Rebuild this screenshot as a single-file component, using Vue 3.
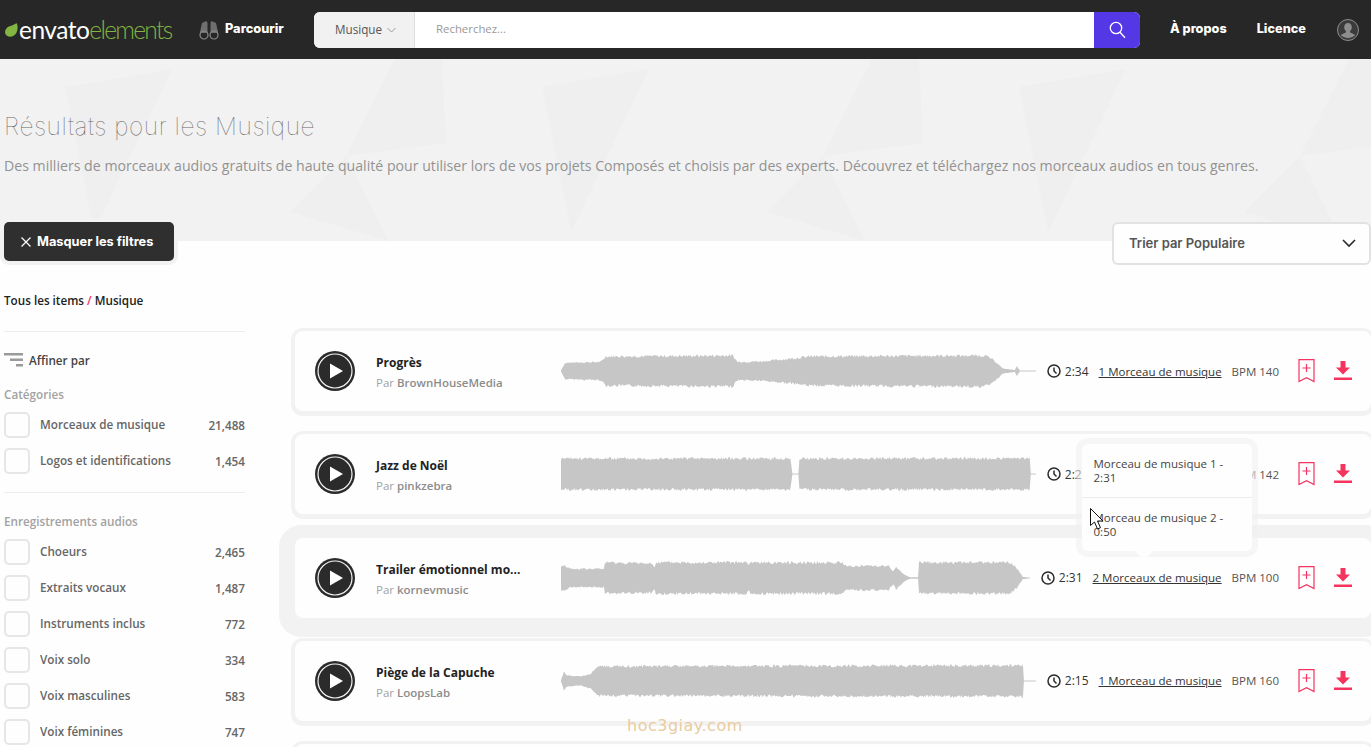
<template>
  <div class="page">
    <header class="topbar">
      <div class="logo">
        <svg class="leaf" width="15" height="16" viewBox="0 0 15 16"><path d="M12.6 1.2c1.6 2.6 1.4 7.6-.8 10.6-2.2 3-6.4 3.6-8.8 2C.8 12.2.4 9.4 2 7c1.8-2.8 5-3 7-4 1.4-.7 2.800-1.500 3.600-1.800z" fill="#82b541"/></svg>
        <span class="logo-a">envato</span><span class="logo-b">elements</span>
      </div>
      <a class="browse">
        <svg width="20" height="22" viewBox="0 0 20 22" fill="none">
          <path d="M7.500 2 3 4 .8 14h7.700V4zM12.500 2 17 4l2.200 10h-7.700V4z" fill="#6f6f6f"/>
          <circle cx="5" cy="16" r="4" stroke="#8b8b8b" stroke-width="1.200"/>
          <circle cx="15" cy="16" r="4" stroke="#8b8b8b" stroke-width="1.200"/>
        </svg>
        <span>Parcourir</span>
      </a>
      <div class="search">
        <div class="search-cat"><span>Musique</span>
          <svg width="9" height="6" viewBox="0 0 9 6" fill="none"><path d="M.5 1l4 4 4-4" stroke="#999"/></svg>
        </div>
        <div class="search-input">Recherchez...</div>
        <div class="search-btn">
          <svg width="17" height="18" viewBox="0 0 17 18" fill="none" stroke="#fff" stroke-width="1.300"><circle cx="7" cy="7" r="5.700"/><path d="M11 11.200l5 5.600"/></svg>
        </div>
      </div>
      <a class="nav">À propos</a>
      <a class="nav">Licence</a>
      <div class="avatar">
        <svg width="22" height="22" viewBox="0 0 22 22"><circle cx="11" cy="11" r="10.500" fill="#3b3b3b" stroke="#8e8e8e"/><path d="M11 4c2.300 0 3.800 1.800 3.800 4.300 0 1.600-.8 3-1.700 3.800v1.300c1.800.8 4 1.300 5 2.800a10 10 0 0 1-14.200 0c1-1.500 3.200-2 5-2.800v-1.300c-.9-.8-1.700-2.200-1.700-3.800C7.200 5.800 8.700 4 11 4z" fill="#8e8e8e"/></svg>
      </div>
    </header>

    <section class="hero">
      <svg class="hero-bg" width="1371" height="182" viewBox="0 0 1371 182">
        <g v-for="dx in [-477, 0, 477, 954]" :key="dx" :transform="`translate(${dx} 0)`">
          <polygon v-for="(p, i) in heroShapes" :key="i" :points="p" fill="#efefef" />
        </g>
      </svg>
      <h1>Résultats pour les Musique</h1>
      <p>Des milliers de morceaux audios gratuits de haute qualité pour utiliser lors de vos projets Composés et choisis par des experts. Découvrez et téléchargez nos morceaux audios en tous genres.</p>
    </section>

    <div class="toolbar">
      <button class="hide-btn">
        <svg width="10" height="10" viewBox="0 0 10 10" stroke="#fff" stroke-width="1.200"><path d="M.5.500l9 9M9.500.500l-9 9"/></svg>
        Masquer les filtres
      </button>
      <div class="sort">
        <span>Trier par Populaire</span>
        <svg width="14" height="9" viewBox="0 0 14 9" fill="none" stroke="#2a2a2a" stroke-width="1.600"><path d="M1 1l6 6 6-6"/></svg>
      </div>
    </div>

    <div class="main">
      <aside class="sidebar">
        <div class="crumbs">Tous les items <i>/</i> Musique</div>
        <hr />
        <div class="refine">
          <svg width="19" height="14" viewBox="0 0 19 14" fill="#9a9a9a"><rect width="19" height="2.500"/><rect x="6" y="5.500" width="13" height="2.500"/><rect x="12" y="11" width="7" height="2.500"/></svg>
          Affiner par
        </div>
        <template v-for="(group, g) in filters" :key="group.title">
          <hr v-if="g > 0" class="group-line" />
          <div class="group-title">{{ group.title }}</div>
          <div v-for="item in group.items" :key="item[0]" class="filter">
            <span class="check"></span>
            <span class="filter-name">{{ item[0] }}</span>
            <span class="filter-count">{{ item[1] }}</span>
          </div>
        </template>
      </aside>

      <div class="list">
        <article v-for="track in tracks" :key="track.title" class="card" :class="{ hover: track.hover }">
          <svg class="play" width="40" height="40" viewBox="0 0 40 40">
            <circle cx="20" cy="20" r="20" fill="#2b2b2b"/>
            <circle cx="20" cy="20" r="17" fill="none" stroke="#f4f4f4" stroke-width="1.200"/>
            <path d="M15 12.500v15l13-7.500z" fill="#fff"/>
          </svg>
          <div class="info">
            <div class="title">{{ track.title }}</div>
            <div class="by">Par <b>{{ track.by }}</b></div>
          </div>
          <div class="wave">
            <svg width="100%" height="40" :viewBox="`0 0 ${track.env[track.env.length - 1][0]} 40`" preserveAspectRatio="none">
              <path :d="wavePath(track.env, track.seed)" fill="#c6c6c7"/>
            </svg>
          </div>
          <div class="clock">
            <svg width="14" height="14" viewBox="0 0 14 14" fill="none" stroke="#2a2a2a" stroke-width="1.500"><circle cx="7" cy="7" r="6"/><path d="M7 3.500V7l2.500 2.500"/></svg>
            {{ track.time }}
          </div>
          <div class="versions">
            <a>{{ track.link }}</a>
            <div v-if="track.hover" class="tip">
              <div class="tip-row">Morceau de musique 1 - 2:31</div>
              <div class="tip-row">Morceau de musique 2 - 0:50</div>
            </div>
          </div>
          <div class="bpm">BPM {{ track.bpm }}</div>
          <svg class="mark" width="17" height="24" viewBox="0 0 17 24" fill="none" stroke="#f5335f" stroke-width="1.200">
            <path d="M1 .6h15v22l-7.500-4-7.500 4z"/><path d="M8.500 5v8M4.500 9h8"/>
          </svg>
          <svg class="down" width="18" height="20" viewBox="0 0 18 20" fill="#f5335f">
            <path d="M6.500 0h5v6.500H16L9 13.500 2 6.500h4.500z"/><rect y="16.500" width="18" height="2.500"/>
          </svg>
        </article>
        <article class="card"></article>
      </div>
    </div>

    <svg class="cursor" width="14" height="23" viewBox="0 0 14 23"><path d="M.5.500v17l4-3.500 3 7 3-1.300-3-6.700h5.500z" fill="#fff" stroke="#111"/></svg>
    <div class="stamp">hoc3giay.com</div>
  </div>
</template>

<script setup>
// le motif du fond se repete tous les 477px
const heroShapes = [
  '65,28 172,10 94,173',
  '395,0 442,0 446,84 346,97',
  '346,97 388,182 290,153',
]

const filters = [
  {
    title: 'Catégories',
    items: [['Morceaux de musique', '21,488'], ['Logos et identifications', '1,454']],
  },
  {
    title: 'Enregistrements audios',
    items: [
      ['Choeurs', '2,465'],
      ['Extraits vocaux', '1,487'],
      ['Instruments inclus', '772'],
      ['Voix solo', '334'],
      ['Voix masculines', '583'],
      ['Voix féminines', '747'],
    ],
  },
]

const tracks = [
  {
    title: 'Progrès', by: 'BrownHouseMedia', time: '2:34', link: '1 Morceau de musique', bpm: 140, seed: 7,
    env: [[0, 0.5], [4, 9], [40, 10], [45, 16], [172, 17], [177, 10], [200, 10.5], [225, 13], [250, 16], [425, 17], [432, 13], [438, 8], [443, 2.5], [455, 1], [457, 5], [460, 0.6], [476, 0.6]],
  },
  {
    title: 'Jazz de Noël', by: 'pinkzebra', time: '2:21', link: '1 Morceau de musique', bpm: 142, seed: 23,
    env: [[0, 16], [1, 17], [227, 17], [229, 0.6], [235, 0.6], [236, 17], [464, 17], [465, 0.6], [470, 0.6]],
  },
  {
    title: 'Trailer émotionnel mo...', by: 'kornevmusic', time: '2:31', link: '2 Morceaux de musique', bpm: 100, hover: true, seed: 41,
    env: [[0, 13], [3, 14], [10, 10], [43, 10], [44, 17], [90, 16], [94, 13], [95, 17], [186, 17], [188, 14], [190, 17], [282, 17], [286, 13], [328, 13.500], [333, 7], [336, 12], [345, 3], [350, 0.7], [358, 0.7], [359, 17], [450, 17], [457, 11], [463, 1], [470, 0.5]],
  },
  {
    title: 'Piège de la Capuche', by: 'LoopsLab', time: '2:15', link: '1 Morceau de musique', bpm: 160, seed: 59,
    env: [[0, 1], [3, 10], [6, 6], [20, 5], [30, 8], [36, 16], [465, 17], [466, 0.6], [478, 0.6]],
  },
]

// enveloppe + petit bruit, pour que le bord soit dentele
const wavePath = (env, seed) => {
  let s = seed
  const rnd = () => {
    s = (s * 9301 + 49297) % 233280
    return s / 233280
  }
  const halfAt = (x) => {
    for (let i = 1; i < env.length; i++) {
      if (x <= env[i][0]) {
        const [x0, h0] = env[i - 1]
        const [x1, h1] = env[i]
        return h0 + (h1 - h0) * ((x - x0) / (x1 - x0 || 1))
      }
    }
    return 0.5
  }
  const end = env[env.length - 1][0]
  const top = []
  const bottom = []
  for (let x = 0; x <= end; x += 1) {
    const h = halfAt(x)
    const j = h > 3 ? 0.82 + rnd() * 0.18 : 1
    const k = h > 3 ? 0.82 + rnd() * 0.18 : 1
    top.push(`${x} ${(20 - h * j).toFixed(1)}`)
    bottom.unshift(`${x} ${(20 + h * k).toFixed(1)}`)
  }
  return 'M' + top.concat(bottom).join('L') + 'Z'
}
</script>

<style scoped>
.page {
  position: relative;
  height: 747px;
  overflow: hidden;
  background: #fefefe;
  font-family: "Open Sans", "Liberation Sans", sans-serif;
  font-size: 11.7px;
  color: #333;
}

.topbar {
  display: flex;
  align-items: center;
  height: 59px;
  background: #272727;
  padding-left: 4px;
}
.logo {
  display: flex;
  align-items: center;
  width: 195px;
  font-family: Lato, sans-serif;
  font-size: 24.5px;
  font-weight: 300;
  letter-spacing: -0.5px;
}
.logo-a { color: #fff; font-weight: 400; }
.logo-b { color: #82b541; letter-spacing: -1.7px; }
.browse {
  display: flex;
  align-items: center;
  gap: 6px;
  width: 115px;
  color: #fff;
  font-family: Inter, sans-serif;
  font-weight: 800;
  font-size: 12.8px;
}
.browse span { padding-bottom: 3px; }
.search {
  display: flex;
  width: 826px;
  height: 36px;
  border-radius: 6px;
  overflow: hidden;
  background: #fff;
}
.search-cat {
  display: flex;
  align-items: center;
  gap: 5px;
  width: 101px;
  padding-left: 21px;
  box-sizing: border-box;
  background: #f1f1f1;
  border-right: 1px solid #ddd;
  color: #555;
}
.search-cat span { padding-bottom: 2px; }
.search-input {
  flex: 1;
  display: flex;
  align-items: center;
  padding: 0 0 2px 21px;
  font-size: 11.4px;
  color: #999;
}
.search-btn {
  display: flex;
  align-items: center;
  justify-content: center;
  width: 46px;
  background: #5438e6;
}
.nav {
  color: #fff;
  font-family: Inter, sans-serif;
  font-weight: 800;
  font-size: 12.7px;
  margin-left: 30px;
  padding-bottom: 3px;
}
.avatar {
  display: flex;
  margin-left: 31px;
}

.hero {
  position: relative;
  height: 182px;
  box-sizing: border-box;
  padding: 51px 0 0 4px;
  background: #f2f2f2;
  overflow: hidden;
}
.hero-bg { position: absolute; left: 0; top: 0; }
.hero h1 {
  position: relative;
  margin: 0;
  font-family: Inter, sans-serif;
  font-weight: 100;
  font-size: 24.5px;
  letter-spacing: 0.55px;
  line-height: 32px;
  color: #666;
}
.hero p {
  position: relative;
  margin: 14px 0 0;
  font-size: 14.15px;
  line-height: 20px;
  color: #929292;
}

.toolbar {
  position: relative;
  display: flex;
  justify-content: space-between;
  align-items: flex-start;
  margin-top: -19px;
  padding-left: 4px;
}
.hide-btn {
  display: flex;
  align-items: center;
  gap: 6px;
  width: 170px;
  height: 39px;
  padding: 0 0 0 17px;
  border: 0;
  border-radius: 5px;
  background: #2f2f2f;
  box-shadow: 0 0 0 4px #f2f2f2;
  color: #fff;
  font-family: Inter, sans-serif;
  font-weight: 700;
  font-size: 12.8px;
}
.sort {
  display: flex;
  align-items: center;
  justify-content: space-between;
  width: 259px;
  height: 43px;
  box-sizing: border-box;
  padding: 0 13px 0 15px;
  border: 2px solid #e2e2e2;
  border-radius: 6px;
  background: #fefefe;
  font-family: Inter, sans-serif;
  font-weight: 600;
  font-size: 13px;
  color: #555;
}
.sort span { padding-bottom: 2px; }

.main {
  display: flex;
  gap: 46px;
  padding-left: 4px;
  margin-top: 21px;
}
.sidebar {
  flex: 0 0 241px;
}
.crumbs {
  margin-top: 4px;
  font-weight: 600;
  line-height: 20px;
  color: #222;
}
.crumbs i { color: #f5335f; font-style: normal; }
hr {
  margin: 21px 0 0;
  border: 0;
  border-top: 1px solid #ececec;
}
.refine {
  display: flex;
  align-items: center;
  gap: 6px;
  margin-top: 18px;
  height: 20px;
  font-weight: 600;
  color: #444;
}
.group-title {
  margin-top: 14px;
  height: 20px;
  line-height: 20px;
  font-weight: 600;
  color: #a2a2a2;
}
hr.group-line { margin-top: 18px; }
hr.group-line + .group-title { margin-top: 18px; }
.filter {
  display: flex;
  align-items: center;
  height: 26px;
  margin-top: 10px;
  font-weight: 600;
  color: #666;
}
.group-title + .filter { margin-top: 8px; }
.check {
  width: 26px;
  height: 26px;
  box-sizing: border-box;
  border: 2px solid #e6e6e6;
  border-radius: 5px;
  margin-right: 10px;
}
.filter-name { flex: 1; margin-top: -2px; }
.filter-count { color: #666; }

.list {
  flex: 1;
  min-width: 0;
  margin-top: 41px;
  padding: 4px 0 0 4px;
  display: flex;
  flex-direction: column;
  gap: 23.3px;
}
.card {
  position: relative;
  display: flex;
  align-items: center;
  flex: 0 0 80px;
  height: 80px;
  padding: 0 19px 0 20px;
  border-radius: 8px;
  background: #fefefe;
  box-shadow: 0 1px 0 4px #f2f2f2;
}
.card.hover {
  box-shadow: 0 3px 0 16px #f2f2f2;
  z-index: 1;
}
.play { flex: none; }
.info {
  flex: 0 0 146px;
  margin: 0 39px 0 21px;
  padding-top: 4px;
  white-space: nowrap;
}
.title {
  font-weight: 700;
  font-size: 12px;
  line-height: 20px;
  color: #222;
}
.by {
  font-size: 11.5px;
  line-height: 20px;
  color: #a2a2a2;
}
.by b { font-weight: 600; color: #8c8c8c; }
.wave {
  flex: 1;
  min-width: 0;
  height: 40px;
  margin-right: 11px;
}
.wave svg { display: block; }
.clock {
  display: flex;
  align-items: center;
  gap: 4px;
  margin-right: 10px;
  font-size: 12px;
  color: #333;
}
.clock svg { flex: none; }
.versions { position: relative; font-size: 11.5px; }
.versions a {
  text-decoration: underline;
  color: #333;
}
.bpm {
  margin-left: 10px;
  font-size: 11.5px;
  color: #555;
}
.mark { flex: none; margin-left: 19px; }
.down { flex: none; margin-left: 19px; }
.tip {
  position: absolute;
  left: -11px;
  bottom: 34px;
  width: 170px;
  background: #fefefe;
  border-radius: 6px;
  box-shadow: 0 0 0 6px rgba(240, 240, 240, 0.6);
  color: #444;
  line-height: 14px;
}
.tip::after {
  content: "";
  position: absolute;
  left: 53px;
  bottom: -9px;
  border-left: 9px solid transparent;
  border-right: 9px solid transparent;
  border-top: 9px solid #fefefe;
}
.tip-row {
  padding: 13px 12px 12px;
}
.tip-row + .tip-row { border-top: 1px solid #ececec; }

.cursor {
  position: absolute;
  left: 1090px;
  top: 508px;
  z-index: 3;
}
.stamp {
  position: absolute;
  left: 627px;
  top: 716px;
  z-index: 3;
  font-family: "DejaVu Sans", sans-serif;
  font-size: 16px;
  letter-spacing: 0.5px;
  color: #e9cca0;
}
</style>

<style>
html, body { overflow: hidden; }
</style>
